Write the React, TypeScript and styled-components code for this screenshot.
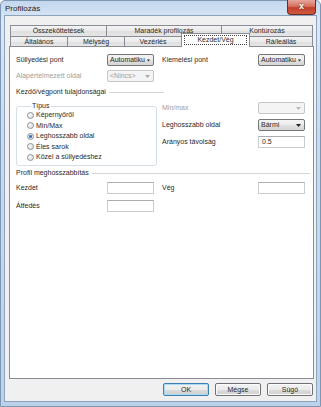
import styled, { createGlobalStyle } from 'styled-components';

const GlobalStyle = createGlobalStyle`
  html, body {
    margin: 0;
    padding: 0;
  }
  body {
    width: 321px;
    height: 407px;
    overflow: hidden;
    font-family: "Liberation Sans", Arial, sans-serif;
    color: #2a2a2a;
  }
`;

const Window = styled.div`
  width: 321px;
  height: 407px;
  box-sizing: border-box;
  display: flex;
  flex-direction: column;
  padding: 0 3px 4px 3px;
  border: 1px solid #7d96b4;
  border-radius: 5px 5px 0 0;
  background: linear-gradient(180deg, #c3d7ee 0%, #dbe8f6 5%, #c9dcf1 30%, #bcd2ea 100%);
`;

const TitleBar = styled.div`
  height: 14px;
  display: flex;
  align-items: flex-start;
  justify-content: space-between;
`;

const Title = styled.div`
  font-size: 8px;
  line-height: 8px;
  color: #1b1b1b;
  padding: 4px 0 0 1px;
`;

const CloseButton = styled.div`
  width: 29px;
  height: 15px;
  margin-top: -1px;
  margin-right: 1px;
  box-sizing: border-box;
  border: 1px solid #6b2c25;
  border-top: none;
  border-radius: 0 0 4px 4px;
  background: linear-gradient(180deg, #e8a79b 0%, #d6705f 45%, #c2402c 55%, #cf5a3f 100%);
  color: #fff;
  font-size: 9px;
  font-weight: bold;
  line-height: 13px;
  text-align: center;
  text-shadow: 0 0 2px #5a1a12;
`;

const Client = styled.div`
  flex: 1;
  display: flex;
  flex-direction: column;
  padding: 9px 2px 0 4px;
  border: 1px solid #8ca2bd;
  background: #f0f0f0;
`;

const TabStrip = styled.div`
  display: flex;
  flex-direction: column;
  margin: 0 1px;
`;

const TabRow = styled.div<{ $height: number }>`
  display: flex;
  align-items: flex-start;
  height: ${p => p.$height}px;
`;

const Tab = styled.div<{ $width: number; $height: number }>`
  width: ${p => p.$width}px;
  height: ${p => p.$height}px;
  box-sizing: border-box;
  flex-shrink: 0;
  margin-left: -1px;
  border: 1px solid #898c95;
  border-bottom: none;
  background: linear-gradient(180deg, #f3f3f3 0%, #ebebeb 50%, #dedede 51%, #e6e6e6 100%);
  font-size: 7px;
  line-height: ${p => p.$height - 1}px;
  text-align: center;
  white-space: nowrap;
  &:first-child {
    margin-left: 0;
  }
`;

const ActiveTab = styled.div<{ $width: number }>`
  width: ${p => p.$width}px;
  height: 14px;
  box-sizing: border-box;
  flex-shrink: 0;
  margin: -3px 0 -1px -1px;
  position: relative;
  z-index: 1;
  padding: 1px 2px 2px;
  border: 1px solid #898c95;
  border-bottom: none;
  background: #fff;
  display: flex;
`;

const FocusRect = styled.span`
  flex: 1;
  border: 1px dotted #444;
  font-size: 7px;
  line-height: 8px;
  text-align: center;
`;

const Panel = styled.div`
  height: 333px;
  box-sizing: border-box;
  border: 1px solid #898c95;
  background: #fff;
  padding: 7px 0 0 6px;
  display: flex;
  flex-direction: column;
`;

const Columns = styled.div<{ $colGap: number; $rowGap: number; $left: number; $top?: number }>`
  display: grid;
  grid-template-columns: ${p => p.$left}px 143px;
  column-gap: ${p => p.$colGap}px;
  row-gap: ${p => p.$rowGap}px;
  margin-top: ${p => p.$top ?? 0}px;
  align-items: start;
`;

const Field = styled.div<{ $label: number }>`
  display: grid;
  grid-template-columns: ${p => p.$label}px 47px;
  align-items: center;
  height: 12px;
`;

const Label = styled.span<{ $disabled?: boolean }>`
  font-size: 7px;
  line-height: 8px;
  white-space: nowrap;
  color: ${p => (p.$disabled ? '#a0a0a0' : '#2a2a2a')};
`;

const Select = styled.div<{ $disabled?: boolean }>`
  height: 12px;
  box-sizing: border-box;
  display: flex;
  align-items: center;
  gap: 2px;
  padding: 0 3px 0 2px;
  border: 1px solid ${p => (p.$disabled ? '#c4c7cb' : '#767676')};
  border-radius: 2px;
  background: ${p =>
    p.$disabled ? '#f4f4f4' : 'linear-gradient(180deg, #f4f4f4 0%, #ececec 50%, #e0e0e0 51%, #d6d6d6 100%)'};
  color: ${p => (p.$disabled ? '#a0a0a0' : '#2a2a2a')};
  font-size: 7px;
  line-height: 8px;
`;

const SelectText = styled.span`
  flex: 1;
  white-space: nowrap;
`;

const TextBox = styled.div`
  height: 12px;
  box-sizing: border-box;
  border: 1px solid #c9ccd1;
  border-top-color: #abadb3;
  background: #fff;
  padding: 0 3px;
  font-size: 7px;
  line-height: 10px;
`;

const SectionHeader = styled.div<{ $width: number; $top: number }>`
  display: flex;
  align-items: center;
  gap: 3px;
  width: ${p => p.$width}px;
  height: 10px;
  margin-top: ${p => p.$top}px;
  &::after {
    content: '';
    flex: 1;
    height: 1px;
    background: #d5d5d5;
  }
`;

const GroupBox = styled.fieldset`
  height: 64px;
  box-sizing: border-box;
  margin: 0;
  padding: 0 0 0 10px;
  border: 1px solid #d5dfe5;
  border-radius: 3px;
`;

const Legend = styled.legend`
  margin-left: 4px;
  padding: 0 1px;
  font-size: 7px;
  line-height: 8px;
`;

const RadioItem = styled.div`
  display: flex;
  align-items: center;
  gap: 2px;
  height: 10.5px;
`;

const RadioDot = styled.span<{ $checked?: boolean }>`
  width: 7px;
  height: 7px;
  box-sizing: border-box;
  border-radius: 50%;
  border: 1px solid #8f9194;
  background: ${p =>
    p.$checked
      ? 'radial-gradient(circle, #2a62b0 0%, #3f7fcf 38%, #e9eef3 45%, #dcdcdc 100%)'
      : 'radial-gradient(circle at 35% 35%, #fafafa 0%, #e2e2e2 70%, #d0d0d0 100%)'};
`;

const RightStack = styled.div`
  display: flex;
  flex-direction: column;
  gap: 5px;
`;

const ButtonRow = styled.div`
  display: flex;
  justify-content: flex-end;
  gap: 6px;
  margin: 4px 1px 0 0;
`;

const Button = styled.button<{ $default?: boolean }>`
  width: 46px;
  height: 13px;
  padding: 0;
  box-sizing: border-box;
  border: 1px solid ${p => (p.$default ? '#3c7fb1' : '#707070')};
  border-radius: 2px;
  box-shadow: ${p => (p.$default ? 'inset 0 0 0 1px #a9dbf6' : 'inset 0 0 0 1px #fcfcfc')};
  background: linear-gradient(180deg, #f2f2f2 0%, #ebebeb 50%, #dddddd 51%, #cfcfcf 100%);
  font-family: "Liberation Sans", Arial, sans-serif;
  font-size: 7px;
  line-height: 11px;
  color: #2a2a2a;
`;

const Arrow = ({ color = '#222' }: { color?: string }) => (
  <svg width="5" height="3" viewBox="0 0 5 3">
    <path d="M0 0 H5 L2.5 3 Z" fill={color} />
  </svg>
);

const radios = ['Képernyőről', 'Min/Max', 'Leghosszabb oldal', 'Éles sarok', 'Közel a süllyedéshez'];

const Profilozas = () => {
  return (
    <Window>
      <TitleBar>
        <Title>Profilozás</Title>
        <CloseButton>x</CloseButton>
      </TitleBar>
      <Client>
        <TabStrip>
          <TabRow $height={11}>
            <Tab $width={97} $height={11}>Összeköttetések</Tab>
            <Tab $width={116} $height={11}>Maradék profilozás</Tab>
            <Tab $width={92} $height={11}>Kontúrozás</Tab>
          </TabRow>
          <TabRow $height={10}>
            <Tab $width={58} $height={10}>Általános</Tab>
            <Tab $width={58} $height={10}>Mélység</Tab>
            <Tab $width={58} $height={10}>Vezérlés</Tab>
            <ActiveTab $width={69}>
              <FocusRect>Kezdet/Vég</FocusRect>
            </ActiveTab>
            <Tab $width={64} $height={10}>Rá/leállás</Tab>
          </TabRow>
        </TabStrip>
        <Panel>
          <Columns $colGap={0} $rowGap={4} $left={146}>
            <Field $label={91}>
              <Label>Süllyedési pont</Label>
              <Select>
                <SelectText>Automatiku</SelectText>
                <Arrow />
              </Select>
            </Field>
            <Field $label={96}>
              <Label>Kiemelési pont</Label>
              <Select>
                <SelectText>Automatiku</SelectText>
                <Arrow />
              </Select>
            </Field>
            <Field $label={91}>
              <Label $disabled>Alapértelmezett oldal</Label>
              <Select $disabled>
                <SelectText>&lt;Nincs&gt;</SelectText>
                <Arrow color="#a8a8a8" />
              </Select>
            </Field>
          </Columns>

          <SectionHeader $width={148} $top={5}>
            <Label>Kezdő/végpont tulajdonságai</Label>
          </SectionHeader>

          <Columns $colGap={5} $rowGap={5} $left={141} $top={5}>
            <GroupBox>
              <Legend>Típus</Legend>
              {radios.map((r, i) => (
                <RadioItem key={r}>
                  <RadioDot $checked={i === 2} />
                  <Label>{r}</Label>
                </RadioItem>
              ))}
            </GroupBox>
            <RightStack>
              <Field $label={96}>
                <Label $disabled>Min/max</Label>
                <Select $disabled>
                  <SelectText />
                  <Arrow color="#b5b5b5" />
                </Select>
              </Field>
              <Field $label={96}>
                <Label>Leghosszabb oldal</Label>
                <Select>
                  <SelectText>Bármi</SelectText>
                  <Arrow />
                </Select>
              </Field>
              <Field $label={96}>
                <Label>Arányos távolság</Label>
                <TextBox>0.5</TextBox>
              </Field>
            </RightStack>
          </Columns>

          <SectionHeader $width={294} $top={2}>
            <Label>Profil meghosszabbítás</Label>
          </SectionHeader>

          <Columns $colGap={0} $rowGap={6} $left={146} $top={4}>
            <Field $label={91}>
              <Label>Kezdet</Label>
              <TextBox />
            </Field>
            <Field $label={96}>
              <Label>Vég</Label>
              <TextBox />
            </Field>
            <Field $label={91}>
              <Label>Átfedés</Label>
              <TextBox />
            </Field>
          </Columns>
        </Panel>
        <ButtonRow>
          <Button type="button" $default>OK</Button>
          <Button type="button">Mégse</Button>
          <Button type="button">Súgó</Button>
        </ButtonRow>
      </Client>
    </Window>
  );
};

const App = () => (
  <>
    <GlobalStyle />
    <Profilozas />
  </>
);

export default App;
